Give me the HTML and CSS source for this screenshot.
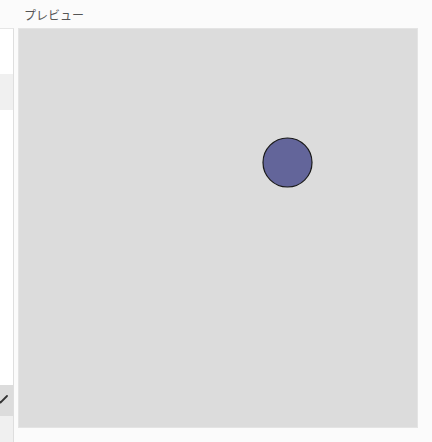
FILE: index.html
```html
<!DOCTYPE html>
<html lang="ja">
<head>
<meta charset="utf-8">
<link rel="stylesheet" href="styles.css">
</head>
<body>
<div class="layout">
  <aside class="sidebar">
    <div class="list">
      <div class="row row-top"></div>
      <div class="row row-alt"></div>
      <div class="row row-fill"></div>
      <div class="row row-selected">
        <svg class="check" width="12" height="12" viewBox="0 0 12 12"><path d="M1 6 L4.5 9.5 L11 3" fill="none" stroke="#333" stroke-width="1.8" stroke-linecap="round" stroke-linejoin="round"/></svg>
      </div>
      <div class="row row-alt row-end"></div>
    </div>
  </aside>
  <main class="preview-pane">
    <div class="preview-title">プレビュー</div>
    <div class="canvas">
      <svg width="398" height="398" viewBox="1 1 398 398">
        <circle cx="269.5" cy="134.5" r="24.5" fill="#63659a" stroke="#1a1a1a" stroke-width="1.2"/>
      </svg>
    </div>
  </main>
</div>
</body>
</html>
```

FILE: styles.css
```css
html, body {
  margin: 0;
  padding: 0;
  background: #fbfbfb;
  font-family: "Noto Sans CJK JP", "Noto Sans", sans-serif;
}
.layout {
  display: flex;
  height: 442px;
  overflow: hidden;
}
.sidebar {
  width: 14px;
  flex: none;
  overflow: hidden;
  display: flex;
  justify-content: flex-end;
  padding-top: 28px;
  box-sizing: border-box;
}
.list {
  width: 200px;
  flex: none;
  display: flex;
  flex-direction: column;
  border-top: 1px solid #e6e6e6;
  border-right: 1px solid #dedede;
  background: #fff;
}
.row {
  display: flex;
  align-items: center;
  justify-content: flex-end;
}
.row-top { height: 45px; }
.row-alt { height: 36px; background: #f0f0f0; }
.row-fill { height: 275px; background: #fff; }
.row-selected {
  height: 31px;
  background: #dcdcdc;
  padding-right: 5px;
  padding-bottom: 3px;
  box-sizing: border-box;
}
.row-end { flex: 1; }
.check { display: block; }
.preview-pane {
  flex: 1;
  padding-left: 4px;
  display: flex;
  flex-direction: column;
}
.preview-title {
  height: 28px;
  box-sizing: border-box;
  padding: 7px 0 0 6px;
  font-size: 12px;
  line-height: 16px;
  color: #555;
}
.canvas {
  width: 400px;
  height: 400px;
  box-sizing: border-box;
  border: 1px solid #e4e4e4;
  background: #dcdcdc;
}
.canvas svg { display: block; }
```
